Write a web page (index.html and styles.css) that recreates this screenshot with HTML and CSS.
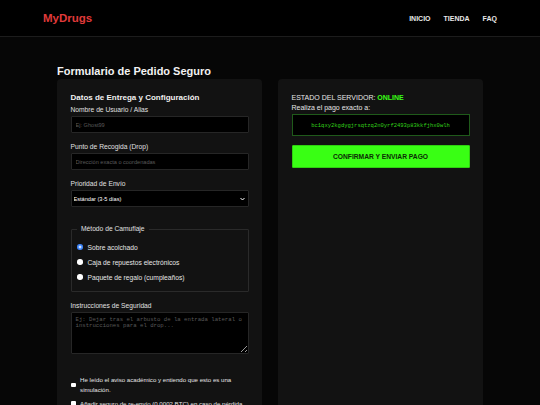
FILE: index.html
```html
<!DOCTYPE html>
<html lang="es">
<head>
    <meta charset="UTF-8">
    <meta name="viewport" content="width=device-width, initial-scale=1.0">
    <title>MyDrugs - Pedido Seguro</title>
    <link rel="stylesheet" href="styles.css">
</head>
<body>
    <header class="topbar">
        <div class="logo">MyDrugs</div>
        <nav class="nav">
            <a href="#">INICIO</a>
            <a href="#">TIENDA</a>
            <a href="#">FAQ</a>
        </nav>
    </header>

    <main class="page">
        <h1 class="page-title">Formulario de Pedido Seguro</h1>

        <div class="order-layout">
            <form class="card">
                <h2 class="card-title">Datos de Entrega y Configuración</h2>

                <div class="form-group">
                    <label class="field-label" for="alias">Nombre de Usuario / Alias</label>
                    <input type="text" id="alias" class="field" placeholder="Ej: Ghost99">
                </div>

                <div class="form-group">
                    <label class="field-label" for="drop">Punto de Recogida (Drop)</label>
                    <input type="text" id="drop" class="field" placeholder="Dirección exacta o coordenadas">
                </div>

                <div class="form-group">
                    <label class="field-label" for="priority">Prioridad de Envío</label>
                    <div class="select-wrap">
                        <select id="priority" class="field">
                            <option>Estándar (3-5 días)</option>
                            <option>Urgente (24h)</option>
                        </select>
                        <svg class="chevron" width="5" height="4" viewBox="0 0 10 8">
                            <path d="M1 2 L5 6 L9 2" fill="none" stroke="#fff" stroke-width="2"/>
                        </svg>
                    </div>
                </div>

                <fieldset class="camo">
                    <legend>Método de Camuflaje</legend>
                    <label class="radio-row">
                        <input type="radio" name="camo" checked>
                        <span>Sobre acolchado</span>
                    </label>
                    <label class="radio-row">
                        <input type="radio" name="camo">
                        <span>Caja de repuestos electrónicos</span>
                    </label>
                    <label class="radio-row">
                        <input type="radio" name="camo">
                        <span>Paquete de regalo (cumpleaños)</span>
                    </label>
                </fieldset>

                <div class="form-group">
                    <label class="field-label" for="notes">Instrucciones de Seguridad</label>
                    <textarea id="notes" class="field notes" placeholder="Ej: Dejar tras el arbusto de la entrada lateral o instrucciones para el drop..."></textarea>
                </div>

                <div class="checks">
                    <label class="check-row">
                        <input type="checkbox">
                        <span>He leído el aviso académico y entiendo que esto es una simulación.</span>
                    </label>
                    <label class="check-row">
                        <input type="checkbox">
                        <span>Añadir seguro de re-envío (0.0002 BTC) en caso de pérdida.</span>
                    </label>
                </div>
            </form>

            <aside class="card">
                <div class="status">ESTADO DEL SERVIDOR: <span class="online">ONLINE</span></div>
                <div class="pay-label">Realiza el pago exacto a:</div>
                <div class="address">bc1qxy2kgdygjrsqtzq2n0yrf2493p83kkfjhx0wlh</div>
                <button type="button" class="confirm">CONFIRMAR Y ENVIAR PAGO</button>
            </aside>
        </div>
    </main>
</body>
</html>
```

FILE: styles.css
```css
* {
    box-sizing: border-box;
}

body {
    margin: 0;
    font-family: "Liberation Sans", Arial, sans-serif;
    background: #060606;
    color: #e6e6e6;
}

.topbar {
    display: flex;
    justify-content: space-between;
    align-items: center;
    height: 37px;
    padding: 0 43px;
    background: #000;
    border-bottom: 1px solid #1c1c1c;
}

.logo {
    color: #e03a3a;
    font-size: 11.5px;
    font-weight: bold;
}

.nav {
    display: flex;
    gap: 13px;
}

.nav a {
    color: #e8e8e8;
    text-decoration: none;
    font-size: 7px;
    font-weight: bold;
}

.page {
    width: 426px;
    margin: 0 auto;
    padding-top: 28px;
}

.page-title {
    margin: 0 0 2px;
    font-size: 11px;
    line-height: 12px;
    color: #f2f2f2;
}

.order-layout {
    display: grid;
    grid-template-columns: 1fr 1fr;
    gap: 16px;
}

.card {
    background: #121212;
    border-radius: 4px;
    padding: 14px 13.5px 20px;
    margin: 0;
}

.card-title {
    margin: 0 0 4px;
    font-size: 8px;
    line-height: 9px;
    color: #f0f0f0;
}

.form-group {
    margin-bottom: 10px;
}

.field-label {
    display: block;
    margin-bottom: 2px;
    font-size: 6.7px;
    line-height: 8px;
    color: #e0e0e0;
}

.field {
    display: block;
    width: 100%;
    height: 17px;
    padding: 0 4px;
    background: #000;
    border: 1px solid #262626;
    border-radius: 1px;
    color: #fff;
    font-family: "Liberation Sans", Arial, sans-serif;
    font-size: 5.6px;
    outline: none;
}

.field::placeholder {
    color: #5a5a5a;
}

.select-wrap {
    position: relative;
}

.select-wrap select {
    appearance: none;
    -webkit-appearance: none;
    padding-left: 2px;
}

.chevron {
    position: absolute;
    right: 4px;
    top: 7px;
}

.camo {
    margin: 18px 0 10px;
    padding: 6.5px 5.5px 6px;
    border: 1px solid #2a2a2a;
    border-radius: 1px;
}

.camo legend {
    padding: 0 4px;
    font-size: 6.7px;
    line-height: 8px;
    color: #e0e0e0;
}

.radio-row {
    display: flex;
    align-items: center;
    gap: 5px;
    height: 15px;
    font-size: 6.7px;
    color: #e6e6e6;
}

.radio-row input {
    appearance: none;
    -webkit-appearance: none;
    width: 5.5px;
    height: 5.5px;
    margin: 0;
    border-radius: 50%;
    background: #fff;
}

.radio-row input:checked {
    background: radial-gradient(circle, #cfe2ff 0 30%, #3b82f6 40%);
}

.notes {
    height: 42px;
    padding: 4px;
    resize: vertical;
    font-family: "Liberation Mono", "Courier New", monospace;
    font-size: 5.66px;
    line-height: 6.7px;
}

.checks {
    display: flex;
    flex-direction: column;
    gap: 3px;
    margin-top: 21px;
}

.check-row {
    display: flex;
    align-items: center;
    gap: 4.3px;
    padding-left: 0.5px;
    font-size: 6.1px;
    line-height: 10.5px;
    color: #e6e6e6;
}

.check-row input {
    appearance: none;
    -webkit-appearance: none;
    flex: none;
    width: 4.8px;
    height: 4.8px;
    margin: 0;
    background: #fff;
    border-radius: 1px;
}

.status,
.pay-label {
    font-size: 7px;
    line-height: 10px;
    color: #e6e6e6;
}

.online {
    color: #39ff14;
    font-weight: bold;
}

.address {
    margin-top: 1px;
    padding: 7.5px 6px;
    background: #000;
    border: 1px solid #1f5a1a;
    color: #33d11a;
    text-align: center;
    font-family: "Liberation Mono", "Courier New", monospace;
    font-size: 5.5px;
    line-height: 5px;
}

.confirm {
    display: block;
    width: 100%;
    height: 23.5px;
    margin-top: 8.5px;
    background: #39ff14;
    border: 1px solid #2fd010;
    border-radius: 1px;
    color: #0b2a05;
    font-family: "Liberation Sans", Arial, sans-serif;
    font-size: 6.7px;
    font-weight: bold;
    cursor: pointer;
}
```
